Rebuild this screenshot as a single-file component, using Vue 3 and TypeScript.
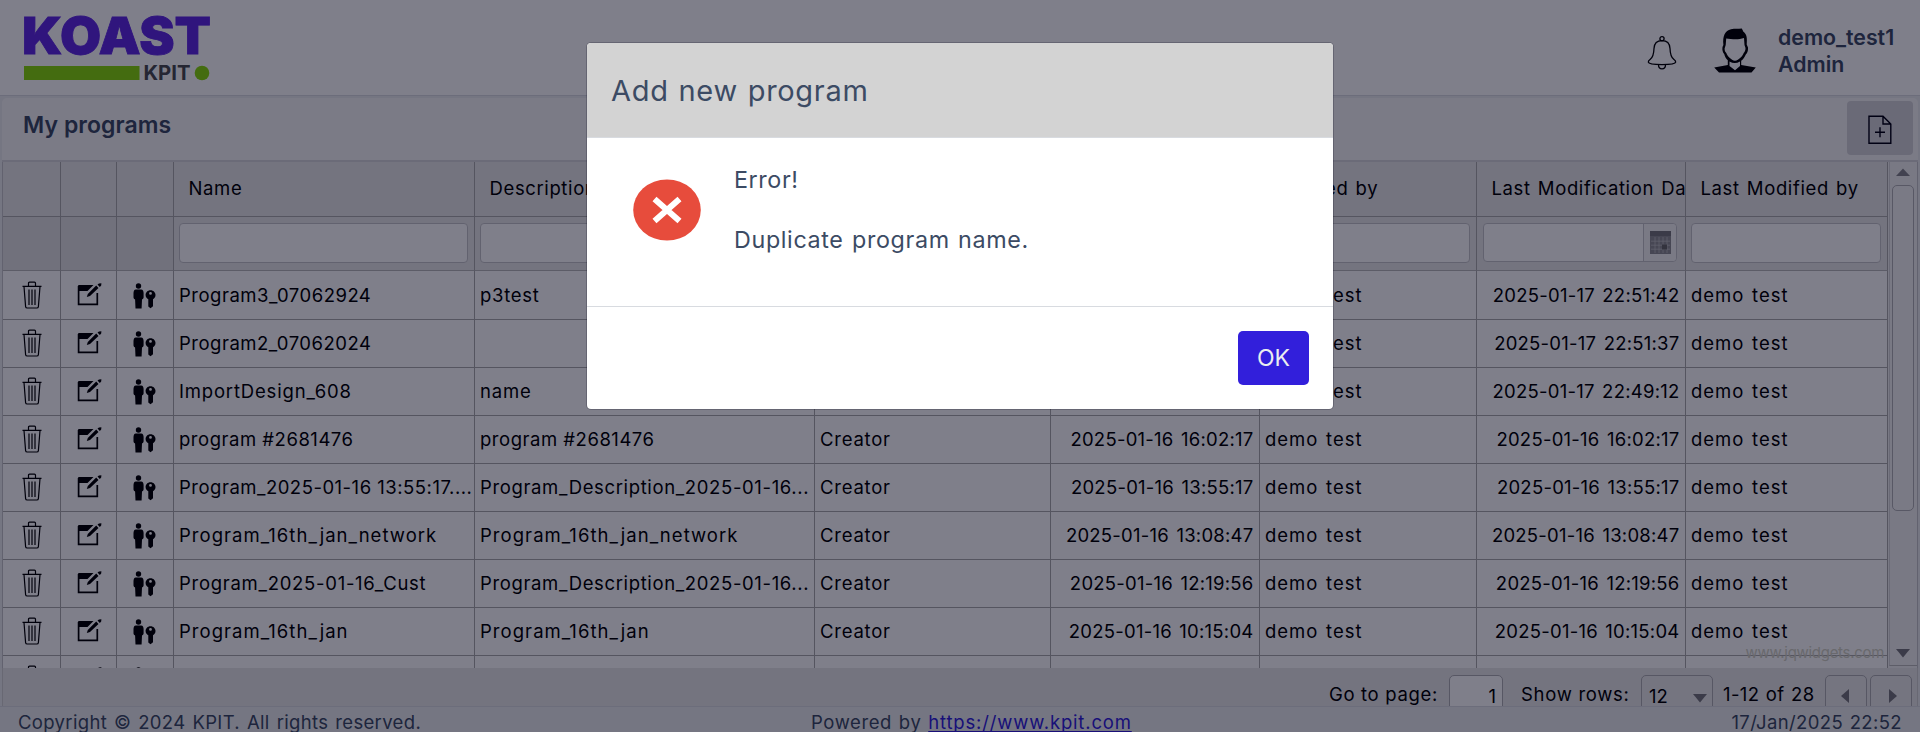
<script setup lang="ts">
interface Row {
  name: string
  desc: string
  date: string
  tracking: number
  descTracking: number
}

const rows: Row[] = [
  { name: 'Program3_07062924', desc: 'p3test', date: '2025-01-17 22:51:42', tracking: 0.5, descTracking: 0.7 },
  { name: 'Program2_07062024', desc: '', date: '2025-01-17 22:51:37', tracking: 0.5, descTracking: 0.6 },
  { name: 'ImportDesign_608', desc: 'name', date: '2025-01-17 22:49:12', tracking: 0.82, descTracking: 0.8 },
  { name: 'program #2681476', desc: 'program #2681476', date: '2025-01-16 16:02:17', tracking: 0.52, descTracking: 0.52 },
  { name: 'Program_2025-01-16 13:55:17....', desc: 'Program_Description_2025-01-16...', date: '2025-01-16 13:55:17', tracking: 0.5, descTracking: 0.64 },
  { name: 'Program_16th_jan_network', desc: 'Program_16th_jan_network', date: '2025-01-16 13:08:47', tracking: 1.04, descTracking: 1.05 },
  { name: 'Program_2025-01-16_Cust', desc: 'Program_Description_2025-01-16...', date: '2025-01-16 12:19:56', tracking: 0.72, descTracking: 0.64 },
  { name: 'Program_16th_jan', desc: 'Program_16th_jan', date: '2025-01-16 10:15:04', tracking: 1.04, descTracking: 1.05 },
  { name: '', desc: '', date: '', tracking: 0, descTracking: 0 },
]

const headers = ['', '', '', 'Name', 'Description', 'Role', 'Creation Date', 'Created by', 'Last Modification Date', 'Last Modified by']
</script>

<template>
  <div class="page">
    <header class="topbar">
      <svg class="logo" width="188" height="66" viewBox="0 0 188 66">
        <text x="-2" y="37.5" class="logo-main" textLength="189" lengthAdjust="spacingAndGlyphs">KOAST</text>
        <rect x="0" y="50" width="115.5" height="14" fill="#88d90a" />
        <text x="119.5" y="64" class="logo-sub" textLength="47" lengthAdjust="spacingAndGlyphs">KPIT</text>
        <circle cx="178" cy="57" r="7.3" fill="#88d90a" />
      </svg>
      <div class="user">
        <svg class="bell" width="30" height="36" viewBox="0 0 30 36" fill="none" stroke="#000" stroke-width="1.3">
          <circle cx="15" cy="3.8" r="2.1" />
          <path d="M15 5.7C9.5 5.7 7.2 9.5 7 13.5 6.8 19 6.3 22 3.3 24.3 1.9 25.4 1.2 26.4 1.3 27.2 1.8 30.4 28.2 30.4 28.7 27.2 28.8 26.4 28.1 25.4 26.7 24.3 23.7 22 23.2 19 23 13.5 22.8 9.5 20.5 5.7 15 5.7Z" />
          <path d="M11.5 29.8C11.5 35.3 18.5 35.3 18.5 29.8" />
        </svg>
        <svg class="avatar" width="42" height="45" viewBox="0 0 42 45">
          <path fill="#000" fill-rule="evenodd" d="M9.4 17C8.4 8 11 2.5 17 1.2 21 .2 24 .8 27.8.4L29.4 3.8C33 6 33.2 11 32.7 16.5L34 19.5C34.3 23 33 25.5 31.8 26.5 30.5 29.5 29 31.5 27.2 32.8V37L41.8 39.5 37.5 44.4H5L.2 39.5 13.8 37V32.3C12 30.5 10.8 28.5 10.2 26 8.8 24.5 8 22 8.5 19ZM12.2 10.5 11.7 17 10.6 20.5C10.6 23 11.5 24.3 12.3 24.9 13.5 28 17 32 21 32.8 25 32 28.5 28 29.7 24.9 30.6 24.1 31.6 22.5 31.5 20L30.5 17 30 10C24 12.2 17 11 12.2 10.5ZM15.5 33.5V38L21 42.2 26 38V33.5C22.5 35.5 19 35.5 15.5 33.5Z" />
        </svg>
        <div class="who"><div class="who-name">demo_test1</div><div class="who-role">Admin</div></div>
      </div>
    </header>

    <section class="panel">
      <div class="panel-head">
        <h1>My programs</h1>
        <button class="add" aria-label="Add program">
          <svg width="24" height="30" viewBox="0 0 24 30" fill="none" stroke="#000010" stroke-width="1.4">
            <path d="M1 1.2H15L22.8 9V28.3H1ZM15 1.2V9H22.8" />
            <path d="M7 17.2H17M12 12.2V22.2" />
          </svg>
        </button>
      </div>

      <div class="grid">
        <div class="table">
          <div class="row head">
            <div v-for="(h, i) in headers" :key="i" class="cell th">{{ h }}</div>
          </div>
          <div class="row filter">
            <div v-for="(h, i) in headers" :key="i" class="cell" :class="{ pinned: i < 3 }">
              <div v-if="i > 2" class="input" :class="{ dated: h.endsWith('Date') }">
                <span v-if="h.endsWith('Date')" class="cal">
                  <svg width="21" height="23" viewBox="0 0 21 23">
                    <rect width="21" height="23" fill="#8e8e92" />
                    <rect width="21" height="5" fill="#77777a" />
                    <path d="M1 10.2H20M1 14.2H20M1 18.2H20M5 6V22M9 6V22M13 6V22M17 6V22" stroke="#c0c0c2" stroke-width=".8" />
                    <rect x="12" y="13.5" width="5" height="5" fill="#666" />
                  </svg>
                </span>
              </div>
            </div>
          </div>
          <div v-for="(r, i) in rows" :key="i" class="row data">
            <div class="cell icon">
              <svg width="20" height="28" viewBox="0 0 20 28" fill="none" stroke="#000" stroke-width="1.2">
                <path d="M.5 5.3H19.5M6.5 5V2.2Q6.5 1.2 7.5 1.2H12.5Q13.5 1.2 13.5 2.2V5M2 5.5 3.6 25.6Q3.8 27 5.2 27H14.8Q16.2 27 16.4 25.6L18 5.5M7 8.5V24M10 8.5V24M13 8.5V24" />
              </svg>
            </div>
            <div class="cell icon">
              <svg class="edit" width="25" height="24" viewBox="0 0 25 24">
                <path d="M1.6 3V21.4H20.3V10" fill="none" stroke="#000" stroke-width="1.7" />
                <path d="M1 2.5Q1 2 2 2H16.5L10.5 8H1Z" />
                <path d="M19.2 2.6 21.5 4.9 13 13.1 9.8 14.1 10.8 11ZM20.5 1.6 22 .4 24.4.2 24.2 2.6 22.8 4Z" />
              </svg>
            </div>
            <div class="cell icon">
              <svg class="role" width="23" height="26" viewBox="0 0 23 26">
                <circle cx="5.5" cy="3" r="2.7" />
                <path d="M2.8 6.4H8.2Q10.6 6.8 10.6 10V14.5Q10.4 16.2 9 16.5L8.6 25.4H2.5L2.1 16.5Q.6 16.2.5 14.5V10Q.5 6.8 2.8 6.4Z" />
                <path fill-rule="evenodd" d="M17.5 7.2C20.5 7.2 22.5 9.4 22.5 12 22.5 14 21.4 15.5 20 16.3V23.3L17.5 25.2 15.3 23.5V16.3C13.7 15.5 12.6 14 12.6 12 12.6 9.4 14.5 7.2 17.5 7.2ZM17.5 9A1.4 1.4 0 1 0 17.5 11.8 1.4 1.4 0 1 0 17.5 9Z" />
              </svg>
            </div>
            <div class="cell" :style="{ letterSpacing: r.tracking + 'px' }">{{ r.name }}</div>
            <div class="cell" :style="{ letterSpacing: r.descTracking + 'px' }">{{ r.desc }}</div>
            <div class="cell">{{ r.name && 'Creator' }}</div>
            <div class="cell date">{{ r.date }}</div>
            <div class="cell by">{{ r.name && 'demo test' }}</div>
            <div class="cell date">{{ r.date }}</div>
            <div class="cell by">{{ r.name && 'demo test' }}</div>
          </div>
        </div>
        <div class="scroll">
          <svg width="16" height="8" viewBox="0 0 16 8"><path d="M1 8 8 .5 15 8Z" fill="#85858a" /></svg>
          <div class="thumb"></div>
          <svg width="16" height="9" viewBox="0 0 16 9"><path d="M1 0 8 8.5 15 0Z" fill="#77777c" /></svg>
        </div>
        <div class="mark">www.jqwidgets.com</div>
      </div>

      <div class="pager">
        <span class="goto">Go to page:</span>
        <span class="box page-no">1</span>
        <span class="show">Show rows:</span>
        <span class="box select">12<svg width="14" height="9" viewBox="0 0 14 9"><path d="M0 0 7 8.5 14 0Z" fill="#77777c" /></svg></span>
        <span class="range">1-12 of 28</span>
        <span class="box nav"><svg width="8" height="14" viewBox="0 0 8 14"><path d="M8 0 0 7 8 14Z" fill="#77777c" /></svg></span>
        <span class="box nav last"><svg width="8" height="14" viewBox="0 0 8 14"><path d="M0 0 8 7 0 14Z" fill="#77777c" /></svg></span>
      </div>
    </section>

    <footer class="footer">
      <span class="copy">Copyright © 2024 KPIT. All rights reserved.</span>
      <span class="powered">Powered by <a href="#">https://www.kpit.com</a></span>
      <span class="time">17/Jan/2025 22:52</span>
    </footer>

    <div class="backdrop">
      <div class="modal" role="dialog">
        <div class="modal-head">Add new program</div>
        <div class="modal-body">
          <svg class="error" width="68" height="62" viewBox="0 0 68 62">
            <ellipse cx="34" cy="31" rx="33.8" ry="30.6" fill="#e74c3c" />
            <path d="M21.5 20 46.5 42M46.5 20 21.5 42" stroke="#fff" stroke-width="6" />
          </svg>
          <div class="message"><p class="err">Error!</p><p>Duplicate program name.</p></div>
        </div>
        <div class="modal-foot"><button class="ok">OK</button></div>
      </div>
    </div>
  </div>
</template>

<style>
body { margin: 0; overflow: hidden; }
</style>

<style scoped>
* { box-sizing: border-box; }
.page {
  position: relative;
  display: flex;
  flex-direction: column;
  width: 1920px;
  height: 732px;
  overflow: hidden;
  background: #ebedef;
  color: #3c4b64;
  font: 400 18.5px/24px Inter, "Open Sans", sans-serif;
}
.topbar {
  flex: none;
  height: 96px;
  display: flex;
  justify-content: space-between;
  padding: 0 24px;
  background: #fff;
  border-bottom: 1px solid #d8dbe0;
}
.logo { margin-top: 16px; overflow: visible; }
.logo-main { font: 900 51px Inter, sans-serif; fill: #602ae4; stroke: #602ae4; stroke-width: .8px; }
.logo-sub { font: 700 20px Inter, sans-serif; fill: #4a4c50; }
.user { display: flex; }
.bell { margin: 35px 37px 0 0; }
.avatar { margin: 28px 22px 0 0; }
.who { margin-top: 24px; width: 118px; font-size: 21.3px; font-weight: 600; line-height: 27px; white-space: nowrap; }
.who-name { letter-spacing: 0; }
.who-role { letter-spacing: 0; }
.panel {
  flex: none;
  margin: 2px 2px 0;
  height: 608px;
  border-radius: 5px 5px 0 0;
  background: #f7f7f7;
  overflow: hidden;
}
.panel-head {
  height: 64px;
  display: flex;
  justify-content: space-between;
  padding: 3px 5px 0 21px;
  border-bottom: 2px solid #d6d6da;
}
h1 { margin: 10px 0 0; font-size: 23px; line-height: 28px; font-weight: 600; letter-spacing: .05px; }
.add {
  width: 66px;
  height: 54px;
  padding: 4px 0 0;
  border: 0;
  border-radius: 4px;
  background: #d4d4d9;
  display: flex;
  align-items: center;
  justify-content: center;
}
.grid {
  position: relative;
  display: flex;
  height: 506px;
  overflow: hidden;
  border-left: 1px solid #c4c4c8;
  border-right: 1px solid #c4c4c8;
  background: #f3f3f3;
  color: #000;
}
.table { flex: none; width: 1885px; }
.row { display: grid; grid-template-columns: 58px 56px 57px 301px 340px 236px 209px 217px 209px 202px; height: 48px; background: #fff; }
.cell {
  padding: 11px 0 0 5px;
  border-right: 1px solid #aaa;
  border-bottom: 1px solid #aaa;
  overflow: hidden;
  white-space: nowrap;
  letter-spacing: .75px;
}
.head { height: 55px; background: #e8e8e8; }
.th { padding: 14px 0 0 14.5px; letter-spacing: .62px; word-spacing: 1.4px; }
.filter { height: 54px; background: #e8e8e8; }
.filter + .data { height: 49px; }
.filter + .data .cell { padding-top: 12px; }
.filter + .data .icon { padding-top: 10px; }
.filter .cell { padding: 6px 6px 0 5px; border-bottom-color: #b8b8b8; }
.filter .pinned { background: #e2e2e2; }
.input { height: 40px; border: 1px solid #c5c5c9; border-radius: 4px; background: #fff; }
.input.dated { display: flex; justify-content: flex-end; height: 39px; margin: 0 2px 0 1px; }
.cal { width: 33px; border-left: 1px solid #c5c5c9; display: flex; align-items: center; justify-content: center; background: #f5f5f5; border-radius: 0 4px 4px 0; }
.data .icon { display: flex; justify-content: center; align-items: flex-start; padding: 9px 0 0; }
.filter + .data .icon { padding-top: 10px; }
.edit { margin: 2px 0 0 2px; }
.role { margin: 2px 2px 0 0; }
.data .date { text-align: right; padding-right: 5.5px; padding-left: 0; letter-spacing: .24px; word-spacing: 2px; }
.by { letter-spacing: 1px; word-spacing: 1.5px; }
.scroll {
  flex: 1;
  height: 504px;
  padding: 6px 1px 0 0;
  display: flex;
  flex-direction: column;
  align-items: center;
  margin-left: 1px;
  border-left: 1px solid #d4d4d6;
  border-bottom: 1px solid #bbb;
}
.thumb { width: 22px; height: 326px; margin: 9px 0 138px; border: 1px solid #b0b0b4; border-radius: 5px; background: #f4f4f4; }
.scroll svg { flex: none; }
.mark { position: absolute; right: 33px; bottom: 5px; font: 15px/20px Inter, sans-serif; letter-spacing: -.3px; color: #000; color: #d2d2c4; }
.pager {
  height: 38px;
  display: flex;
  padding: 7px 5px 0 0;
  justify-content: flex-end;
  background: #e8e8e8;
  border-left: 1px solid #d0d0d0;
  border-right: 1px solid #d0d0d0;
  color: #000;
  white-space: nowrap;
}
.pager > span { flex: none; line-height: 24px; padding-top: 7px; }
.pager .goto { width: 120px; letter-spacing: .66px; }
.pager .box { height: 44px; border: 1px solid #aeaeb2; border-radius: 5px; background: #ebebeb; }
.pager .page-no { width: 54px; background: #fff; text-align: right; padding: 8px 6px 0 0; }
.pager .show { width: 138px; padding-left: 18px; letter-spacing: .7px; }
.pager .select { width: 72px; display: flex; justify-content: space-between; padding: 8px 5px 0 7px; }
.select svg { margin-top: 10px; }
.pager .range { width: 112px; padding-left: 10px; letter-spacing: .4px; word-spacing: .8px; }
.pager .nav { width: 42px; display: flex; justify-content: center; padding: 13px 3px 0 0; }
.pager .last { margin-left: 3px; padding: 13px 0 0 3px; }
.footer {
  flex: none;
  height: 26px;
  display: grid;
  grid-template-columns: 811px 1fr auto;
  padding: 0 18px 0 0;
  border-top: 1px solid #d8dbe0;
  background: #ebedef;
  line-height: 30px;
  white-space: nowrap;
}
.copy { padding-left: 18px; letter-spacing: .34px; word-spacing: 1.4px; }
.powered { letter-spacing: .6px; word-spacing: 1px; }
.powered a { color: #321fdb; letter-spacing: .83px; text-decoration: underline; text-underline-offset: 2px; text-decoration-thickness: 1px; text-decoration-skip-ink: none; }
.time { letter-spacing: .38px; word-spacing: 1px; }
.backdrop {
  position: absolute;
  inset: 0;
  display: flex;
  justify-content: center;
  align-items: flex-start;
  padding-top: 42px;
  background: rgba(0, 0, 21, .5);
}
.modal {
  width: 748px;
  height: 368px;
  border: 1px solid rgba(0, 0, 21, .2);
  border-radius: 5px;
  background: #fff;
  background-clip: padding-box;
  overflow: hidden;
}
.modal-head { height: 95px; padding: 31px 0 0 24px; background: #d3d3d3; border-bottom: 1px solid #d8dbe0; font-size: 29px; line-height: 34px; letter-spacing: .7px; word-spacing: 1px; }
.modal-body { height: 168px; display: flex; font-size: 23.3px; line-height: 30px; }
.error { margin: 41px 0 0 46px; }
.message { margin: 27px 0 0 33px; }
p { margin: 0 0 30px; letter-spacing: .65px; word-spacing: 1.2px; }
.err { letter-spacing: .6px; }
.modal-foot { height: 103px; border-top: 1px solid #d8dbe0; padding: 24px 24px 0 0; display: flex; justify-content: flex-end; }
.ok { width: 71px; height: 54px; padding: 0; border: 0; border-radius: 5px; background: #321fdb; color: #ebedef; font: 400 23px Inter, sans-serif; }
</style>
